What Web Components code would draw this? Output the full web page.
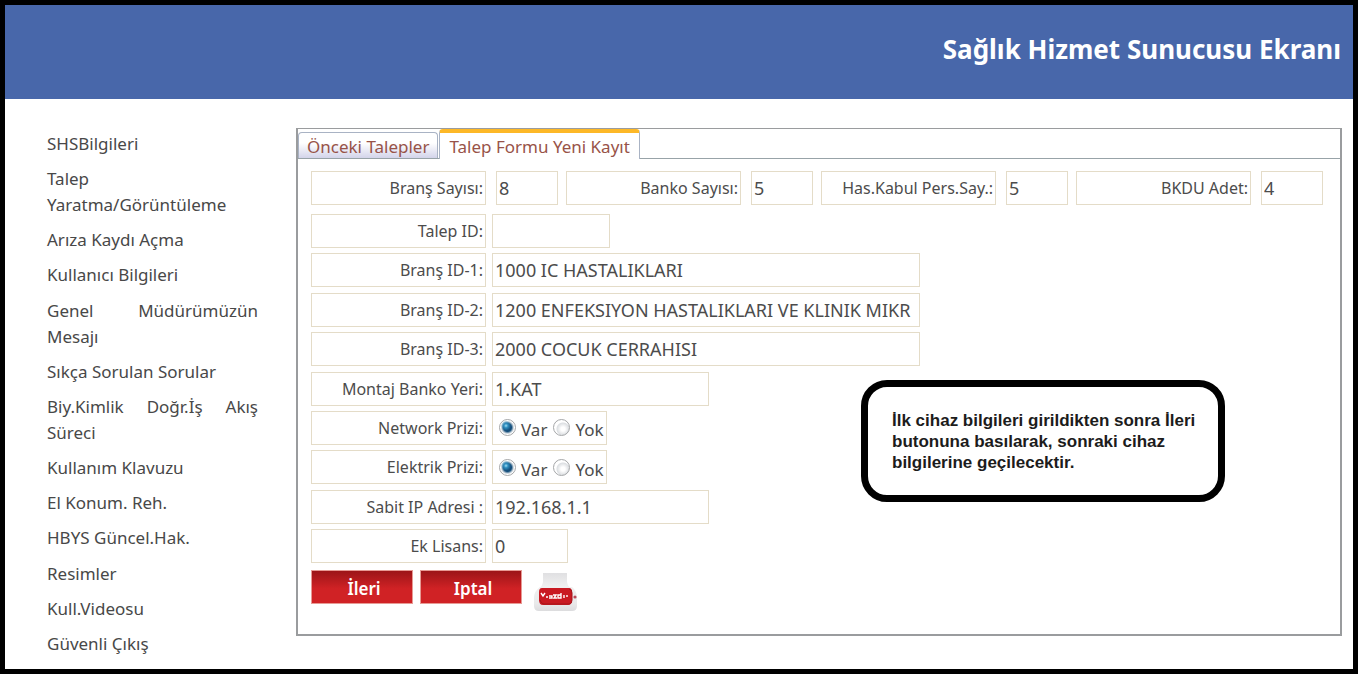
<!DOCTYPE html>
<html lang="tr">
<head>
<meta charset="utf-8">
<title>Sağlık Hizmet Sunucusu Ekranı</title>
<style>
  html, body { margin: 0; background: #fff; }
  body { font-family: "Noto Sans", "Open Sans", sans-serif; font-size: 16px; color: #4c4c4c; }
</style>
</head>
<body>
<shs-page>
  <shs-header slot="header">Sağlık Hizmet Sunucusu Ekranı</shs-header>
  <shs-menu slot="menu"></shs-menu>
  <shs-panel slot="content">
    <shs-tab slot="tabs">Önceki Talepler</shs-tab>
    <shs-tab slot="tabs" active>Talep Formu Yeni Kayıt</shs-tab>
    <shs-field slot="summary" compact label="Branş Sayısı:" value="8"></shs-field>
    <shs-field slot="summary" compact label="Banko Sayısı:" value="5"></shs-field>
    <shs-field slot="summary" compact label="Has.Kabul Pers.Say.:" value="5"></shs-field>
    <shs-field slot="summary" compact label="BKDU Adet:" value="4"></shs-field>
    <shs-field label="Talep ID:" value="" size="s"></shs-field>
    <shs-field label="Branş ID-1:" value="1000 IC HASTALIKLARI" size="l"></shs-field>
    <shs-field label="Branş ID-2:" value="1200 ENFEKSIYON HASTALIKLARI VE KLINIK MIKR" size="l"></shs-field>
    <shs-field label="Branş ID-3:" value="2000 COCUK CERRAHISI" size="l"></shs-field>
    <shs-field label="Montaj Banko Yeri:" value="1.KAT" size="m"></shs-field>
    <shs-choice label="Network Prizi:"></shs-choice>
    <shs-choice label="Elektrik Prizi:"></shs-choice>
    <shs-field label="Sabit IP Adresi :" value="192.168.1.1" size="m"></shs-field>
    <shs-field label="Ek Lisans:" value="0" size="xs"></shs-field>
    <shs-button slot="actions">İleri</shs-button>
    <shs-button slot="actions">Iptal</shs-button>
    <shs-print slot="actions"></shs-print>
    <shs-note slot="note">İlk cihaz bilgileri girildikten sonra İleri butonuna basılarak, sonraki cihaz bilgilerine geçilecektir.</shs-note>
  </shs-panel>
</shs-page>

<script>
function define(name, render) {
  customElements.define(name, class extends HTMLElement {
    constructor() { super(); this.attachShadow({ mode: "open" }); }
    connectedCallback() {
      this.shadowRoot.innerHTML = "<style>*{box-sizing:border-box}</style>" + render(this);
    }
  });
}

define("shs-page", () => `
  <style>
    :host { display: flex; flex-direction: column; box-sizing: border-box; min-height: 100vh; border: 5px solid #000; background: #fff; }
    main { flex: 1; display: grid; grid-template-columns: 211px minmax(0, 1fr); column-gap: 38px; padding: 29px 11px 11px 42px; }
  </style>
  <slot name="header"></slot>
  <main><slot name="menu"></slot><slot name="content"></slot></main>`);

define("shs-header", () => `
  <style>
    :host { display: block; background: #4867aa; color: #fff; }
    h1 { margin: 0; padding: 29px 12px 35px; font-size: 26px; line-height: 30px; font-weight: 700; text-align: right; }
  </style>
  <header><h1><slot></slot></h1></header>`);

const menuItems = ["SHSBilgileri", "Talep Yaratma/Görüntüleme", "Arıza Kaydı Açma", "Kullanıcı Bilgileri",
  "Genel Müdürümüzün Mesajı", "Sıkça Sorulan Sorular", "Biy.Kimlik Doğr.İş Akış Süreci", "Kullanım Klavuzu",
  "El Konum. Reh.", "HBYS Güncel.Hak.", "Resimler", "Kull.Videosu", "Güvenli Çıkış"];

define("shs-menu", () => `
  <style>
    :host { display: flex; padding: 3px 0 1px; }
    nav, ul { display: flex; flex: 1; }
    ul { flex-direction: column; justify-content: space-between; margin: 0; padding: 0; list-style: none; }
    li { line-height: 25px; text-align: justify; }
    a { color: #484848; text-decoration: none; font-size: 17px; }
  </style>
  <nav><ul>${menuItems.map(t => `<li><a href="#">${t}</a></li>`).join("")}</ul></nav>`);

define("shs-panel", () => `
  <style>
    :host { display: flex; flex-direction: column; position: relative; box-sizing: border-box; margin-bottom: 22px;
      border: 2px solid #9a9c9e; border-top-width: 1px; }
    .tabs { display: flex; align-items: flex-end; height: 30px; border-bottom: 1px solid #98a3a8; gap: 1px; }
    form { flex: 1; display: flex; flex-direction: column; padding: 12px 17px 22px 13px; }
    .summary { display: grid; grid-template-columns: repeat(4, minmax(0, 1fr)); gap: 8px; }
    .rows { flex: 1; display: flex; flex-direction: column; justify-content: space-between; margin: 9px 0 7px; }
    .actions { display: flex; align-items: flex-start; gap: 7px; }
  </style>
  <div class="tabs" role="tablist"><slot name="tabs"></slot></div>
  <form>
    <div class="summary"><slot name="summary"></slot></div>
    <div class="rows"><slot></slot></div>
    <div class="actions"><slot name="actions"></slot></div>
  </form>
  <slot name="note"></slot>`);

define("shs-tab", el => `
  <style>
    :host { display: block; }
    :host([active]) { margin-bottom: -1px; }
    button { display: block; height: 26px; padding: 2px 8px 0; font: inherit; font-size: 17px; line-height: 22px; color: #985348;
      border: 1px solid #a9b3c4; border-bottom: 0; border-radius: 4px 4px 0 0; background: linear-gradient(#fff 40%, #d3d4ea); }
    :host([active]) button { height: 30px; padding: 2px 9px 0; border-top: 4px solid #fdb827; background: #fff; }
  </style>
  <button type="button" role="tab" aria-selected="${el.hasAttribute("active")}"><slot></slot></button>`);

const boxStyles = `
  :host { display: flex; gap: 6px; }
  .label { flex: none; width: 175px; height: 34px; padding-right: 2px; border: 1px solid #e4dcc8; line-height: 32px; text-align: right; white-space: nowrap; font-size: 16px; }`;

define("shs-field", el => `
  <style>
    ${boxStyles}
    :host([compact]) { gap: 10px; }
    :host([compact]) .label { flex: 1; width: auto; }
    input { width: 62px; height: 34px; padding: 0 0 0 2px; border: 1px solid #e4dcc8; border-radius: 0; outline: 0;
      background: #fff; color: inherit; font: inherit; font-size: 18px; }
    :host([size="xs"]) input { width: 76px; }
    :host([size="s"]) input { width: 118px; }
    :host([size="m"]) input { width: 217px; }
    :host([size="l"]) input { width: 428px; }
  </style>
  <label class="label" for="f">${el.getAttribute("label")}</label>
  <input id="f" type="text" value="${el.getAttribute("value")}">`);

define("shs-choice", el => `
  <style>
    ${boxStyles}
    .box { display: flex; align-items: center; width: 115px; height: 34px; padding: 0 0 0 6px; border: 1px solid #e4dcc8; font-size: 17px; white-space: nowrap; }
    .box label { padding: 4px 6px 0 5px; }
    input { appearance: none; flex: none; width: 17px; height: 17px; margin: 0; border: 1px solid #a4a6a8; border-radius: 50%;
      background: radial-gradient(circle at 60% 60%, #fff 0 2px, #dcdfe2 6px, #fff 7px); }
    input:checked { background: radial-gradient(circle at 40% 38%, #9fdcf2 0, #2f8fc0 2px, transparent 5px), radial-gradient(circle, #154f7c 0 4px, #cfd8df 6px, #fff 7px); }
  </style>
  <span class="label" id="l">${el.getAttribute("label")}</span>
  <div class="box" role="radiogroup" aria-labelledby="l">
    <input type="radio" name="r" id="var" checked><label for="var">Var</label>
    <input type="radio" name="r" id="yok"><label for="yok">Yok</label>
  </div>`);

define("shs-button", () => `
  <style>
    :host { display: block; }
    button { display: block; width: 102px; height: 34px; padding: 2px 0 0 4px; border: 1px solid #e79a94; border-radius: 0;
      background: linear-gradient(#9c1518, #d02225 55%); color: #fff; font: inherit; font-size: 17px; font-weight: 600; }
  </style>
  <button type="button"><slot></slot></button>`);

define("shs-print", () => `
  <style>
    :host { display: block; margin: 2px 0 0 4px; }
    button { display: block; padding: 0; border: 0; background: none; }
    svg { display: block; }
  </style>
  <button type="button" aria-label="Yazdır">
    <svg width="46" height="40" viewBox="0 0 46 40">
      <defs>
        <linearGradient id="p" x2="0" y2="1"><stop stop-color="#e0e0e2"/><stop offset="1" stop-color="#f2f2f2"/></linearGradient>
        <linearGradient id="b" x2="0" y2="1"><stop stop-color="#f0f0f0"/><stop offset=".7" stop-color="#e9e9ea"/><stop offset="1" stop-color="#dcdcde"/></linearGradient>
      </defs>
      <path d="M10 1h24v9q1 5 4 6H6q3-1 4-6z" fill="url(#p)"/>
      <path d="M7 15h32q5 4 5 11v8q0 5-5 5H6q-5 0-5-5v-8q0-7 6-11z" fill="url(#b)"/>
      <path d="M9 16h27q3 0 3 4v8q0 5-4 5H10q-4 0-4-5v-8q0-4 3-4z" fill="#c91a22"/>
      <path d="M36 17q3 0 3 4v7q0 4-3 4M7 28q1 4 4 4h25" fill="none" stroke="#a5141b"/>
      <circle cx="42" cy="25" r="1.6" fill="#b84a58"/>
      <path d="M8 21l2 3 2-3M13 25h2M16 24h3v2h-3M20 23h3l-2 3h3M25 23h3v3h-3zM28 21v5M31 23v3M34 23v2" fill="none" stroke="#fff" stroke-width="1.4"/>
    </svg>
  </button>`);

define("shs-note", () => `
  <style>
    :host { display: block; position: absolute; top: 251px; right: 115px; box-sizing: border-box; width: 364px; height: 122px;
      padding: 23px 12px 23px 24px; border: 7px solid #000; border-radius: 26px; background: #fff; color: #1c1c1c;
      font: bold 17px/21px "Liberation Sans", Arial, sans-serif; }
  </style>
  <slot></slot>`);
</script>
</body>
</html>
